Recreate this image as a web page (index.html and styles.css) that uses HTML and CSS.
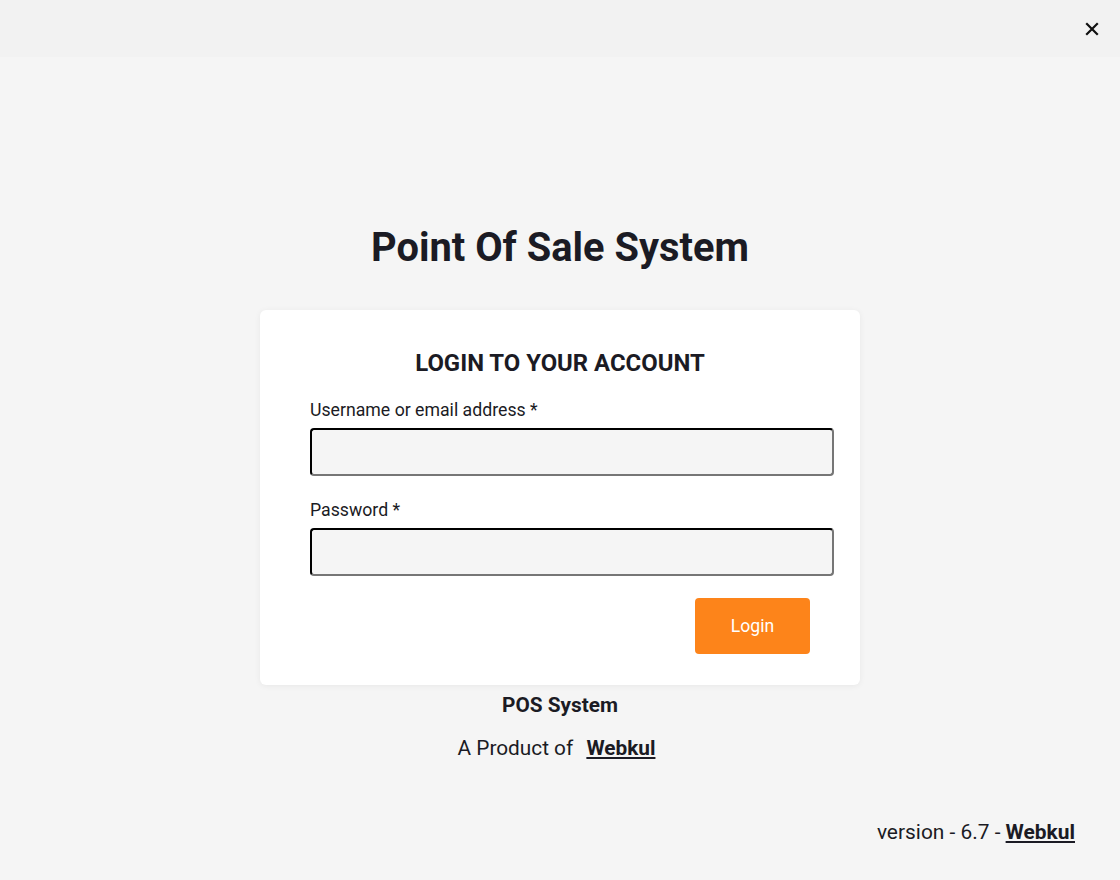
FILE: index.html
```html
<!DOCTYPE html>
<html lang="en">
<head>
<meta charset="utf-8">
<title>Point Of Sale System</title>
<link rel="stylesheet" href="styles.css">
</head>
<body>
<div class="page">
  <header class="topbar">
    <button class="close" aria-label="Close">
      <svg width="14" height="14" viewBox="0 0 14 14"><path d="M2 2 L12 12 M12 2 L2 12" stroke="#111" stroke-width="2.2" stroke-linecap="square"/></svg>
    </button>
  </header>
  <main class="main">
    <h1 class="title">Point Of Sale System</h1>
    <form class="card">
      <h2 class="card-title">LOGIN TO YOUR ACCOUNT</h2>
      <label class="label" for="user">Username or email address *</label>
      <input class="input" id="user" type="text">
      <label class="label label-pass" for="pass">Password *</label>
      <input class="input" id="pass" type="password">
      <div class="actions">
        <button class="btn" type="button">Login</button>
      </div>
    </form>
    <div class="brand">POS System</div>
    <div class="product">A Product of <a href="#" class="link">Webkul</a></div>
  </main>
  <footer class="version">version - 6.7 - <a href="#" class="link">Webkul</a></footer>
</div>
</body>
</html>
```
FILE: styles.css
```css
* { box-sizing: border-box; }
html, body { margin: 0; padding: 0; }
body {
  font-family: Roboto, "Liberation Sans", sans-serif;
  background: #f5f5f5;
  color: #1b1b24;
  width: 1120px;
  height: 880px;
  overflow: hidden;
}
.page { display: flex; flex-direction: column; height: 880px; }
.topbar {
  height: 57px;
  background: #f2f2f2;
  display: flex;
  justify-content: flex-end;
  align-items: center;
  padding-right: 21px;
}
.close {
  border: 0; background: transparent; padding: 0;
  width: 14px; height: 14px; display: flex;
}
.main {
  display: flex;
  flex-direction: column;
  align-items: center;
  padding-top: 165px;
}
.title {
  margin: 0;
  font-size: 39.8px;
  font-weight: 700;
  line-height: 52px;
}
.card {
  margin-top: 36px;
  width: 600px;
  background: #fff;
  border-radius: 6px;
  box-shadow: 0 1px 6px rgba(0,0,0,0.06);
  padding: 36px 26px 31px 50px;
  display: flex;
  flex-direction: column;
}
.card-title {
  margin: 0 24px 19px 0;
  text-align: center;
  font-size: 23.9px;
  font-weight: 700;
  line-height: 34px;
}
.label {
  font-size: 17.7px;
  line-height: 22px;
  margin-bottom: 7px;
}
.label-pass { margin-top: 23px; }
.input {
  width: 524px;
  height: 48px;
  background: #f5f5f5;
  border: 2px inset #767676;
  border-top-color: #1c1c1c;
  border-left-color: #1c1c1c;
  border-radius: 4px;
  font: inherit;
  outline: none;
}
.actions {
  display: flex;
  justify-content: flex-end;
  width: 524px;
  padding-right: 24px;
  margin-top: 22px;
}
.btn {
  width: 115px;
  height: 56px;
  background: #fd841a;
  color: #fff;
  border: 0;
  border-radius: 4px;
  font-family: inherit;
  font-size: 17.6px;
}
.brand {
  margin-top: 8px;
  font-size: 20.8px;
  font-weight: 700;
  line-height: 24px;
}
.product {
  margin-top: 19px;
  padding-right: 7px;
  font-size: 20.8px;
  line-height: 24px;
}
.link {
  color: #1b1b24;
  font-weight: 700;
  text-decoration: underline;
  text-underline-offset: 2px;
  margin-left: 8px;
}
.version {
  margin-top: auto;
  margin-bottom: 36px;
  align-self: flex-end;
  padding-right: 45px;
  font-size: 20.9px;
  line-height: 24px;
}
.version .link { margin-left: 0; }
```
